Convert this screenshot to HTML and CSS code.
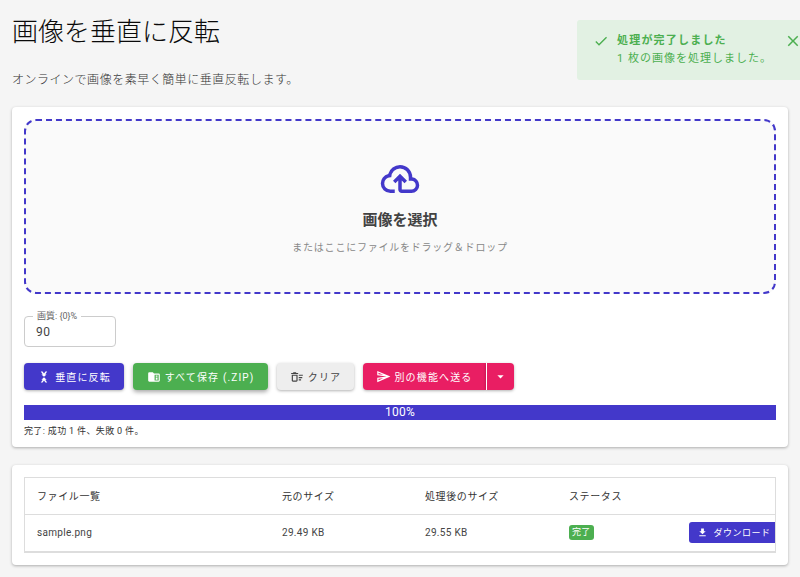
FILE: index.html
```html
<!DOCTYPE html>
<html lang="ja">
<head>
<meta charset="utf-8">
<title>画像を垂直に反転</title>
<link rel="stylesheet" href="styles.css">
</head>
<body>
<main class="page">
  <h1 class="title">画像を垂直に反転</h1>
  <p class="subtitle">オンラインで画像を素早く簡単に垂直反転します。</p>

  <section class="card tool">
    <div class="drop">
      <svg class="cloud" viewBox="0 0 24 24"><path d="M6.5 20Q4.22 20 2.61 18.43 1 16.85 1 14.58 1 12.63 2.17 11.1 3.35 9.57 5.25 9.15 5.88 6.85 7.75 5.43 9.63 4 12 4 14.93 4 16.96 6.04 19 8.07 19 11 20.73 11.2 21.86 12.5 23 13.78 23 15.5 23 17.38 21.69 18.69 20.38 20 18.5 20H13Q12.18 20 11.59 19.41 11 18.83 11 18V12.85L9.4 14.4L8 13L12 9L16 13L14.6 14.4L13 12.85V18H18.5Q19.55 18 20.27 17.27 21 16.55 21 15.5 21 14.45 20.27 13.73 19.55 13 18.5 13H17V11Q17 8.93 15.54 7.46 14.08 6 12 6 9.93 6 8.46 7.46 7 8.93 7 11H6.5Q5.05 11 4.03 12.03 3 13.05 3 14.5 3 15.95 4.03 17 5.05 18 6.5 18H9V20Z"/></svg>
      <div class="drop-title">画像を選択</div>
      <div class="drop-sub">またはここにファイルをドラッグ＆ドロップ</div>
    </div>

    <div class="field">
      <span class="field-label">画質: {0}%</span>
      <span class="field-value">90</span>
    </div>

    <div class="actions">
      <button class="btn primary"><svg class="ico" viewBox="0 0 24 24"><path d="M6.500 2.500h3L12 6l2.500-3.500h3L14 7.500h2.500L12 11.500l-4.500-4H10zM12 12.500l4.500 4H14l3.500 5h-3L12 18l-2.500 3.500h-3l3.500-5H7.500z"/></svg>垂直に反転</button>
      <button class="btn green"><svg class="ico" viewBox="0 0 24 24"><path fill-rule="evenodd" d="M4 4h6l2 2h8a2 2 0 0 1 2 2v10a2 2 0 0 1-2 2H4a2 2 0 0 1-2-2V6a2 2 0 0 1 2-2zM13 8v10h7V8zM15 9.500h3v2h-3zM15 13h3v3.500h-3z"/></svg>すべて保存 (.ZIP)</button>
      <button class="btn clear"><svg class="ico" viewBox="0 0 24 24"><path d="M15 16h4v2h-4zm0-8h7v2h-7zm0 4h6v2h-6zM3 18c0 1.100.9 2 2 2h6c1.100 0 2-.9 2-2V8H3v10zm2-8h6v8H5v-8zm5-6H6L5 5H2v2h12V5h-3z"/></svg>クリア</button>
      <div class="split">
        <button class="btn pink main-part"><svg class="ico send" viewBox="0 0 24 24"><path d="M4 6.030L11.500 9.250L4 8.250L4 6.030M11.500 14.750L4 17.970V15.750L11.500 14.750M2 3V10L17 12L2 14V21L23 12L2 3Z"/></svg>別の機能へ送る</button>
        <button class="btn pink caret-part"><svg class="ico" viewBox="0 0 24 24"><path d="M7 10l5 5 5-5z"/></svg></button>
      </div>
    </div>

    <div class="progress">100%</div>
    <p class="result">完了: 成功 1 件、失敗 0 件。</p>
  </section>

  <section class="card list">
    <div class="table-wrap">
      <table class="files">
        <thead>
          <tr><th class="c1">ファイル一覧</th><th class="c2">元のサイズ</th><th class="c3">処理後のサイズ</th><th class="c4">ステータス</th><th class="c5"></th></tr>
        </thead>
        <tbody>
          <tr>
            <td>sample.png</td><td>29.49 KB</td><td>29.55 KB</td>
            <td><span class="chip">完了</span></td>
            <td class="cell-btn"><button class="dl"><svg class="ico small" viewBox="0 0 24 24"><path d="M5 20h14v-2H5zM19 9h-4V3H9v6H5l7 7z"/></svg>ダウンロード</button></td>
          </tr>
        </tbody>
      </table>
    </div>
  </section>
</main>

<aside class="toast">
  <svg class="toast-check" viewBox="0 0 24 24"><path d="M21 7L9 19l-5.500-5.500 1.410-1.410L9 16.170 19.590 5.590z"/></svg>
  <div class="toast-text">
    <div class="toast-title">処理が完了しました</div>
    <div class="toast-msg">1 枚の画像を処理しました。</div>
  </div>
  <svg class="toast-close" viewBox="0 0 24 24"><path d="M19 6.410L17.590 5 12 10.590 6.410 5 5 6.410 10.590 12 5 17.590 6.410 19 12 13.410 17.590 19 19 17.590 13.410 12z"/></svg>
</aside>
</body>
</html>
```
FILE: styles.css
```css
* { box-sizing: border-box; }
html, body { margin: 0; height: 577px; overflow: hidden; }
body {
  background: #f5f5f5;
  color: #333;
  font-family: Roboto, "Noto Sans CJK JP", sans-serif;
  position: relative;
}
.page { padding: 12px 12px 0; }
.title {
  margin: 0;
  font-size: 26px;
  line-height: 40px;
  font-weight: 300;
  color: #0a0a0a;
}
.subtitle {
  margin: 19px 0 0;
  font-size: 12px;
  line-height: 18px;
  letter-spacing: .52px;
  font-weight: 300;
  color: #333;
}
.card {
  background: #fff;
  border-radius: 4px;
  box-shadow: 0 1px 3px rgba(0,0,0,.3);
}
.tool { margin-top: 18px; height: 340px; padding: 12px; }
.drop {
  height: 175px;
  border: 2px dashed #4338ca;
  border-radius: 12px;
  background: #fafafa;
  display: flex;
  flex-direction: column;
  align-items: center;
  padding-top: 37px;
}
.cloud { width: 42px; height: 42px; fill: #4338ca; display: block; }
.drop-title { margin-top: 9px; font-size: 15px; line-height: 22px; font-weight: 700; color: #424242; }
.drop-sub { margin-top: 9px; font-size: 10px; line-height: 16px; letter-spacing: .77px; color: #888; }
.field {
  position: relative;
  margin-top: 22px;
  width: 92px;
  height: 31px;
  border: 1px solid #ccc;
  border-radius: 4px;
  background: #fff;
  padding: 7px 11px;
}
.field-label {
  position: absolute;
  top: -6px;
  left: 8px;
  padding: 0 4px;
  background: #fff;
  font-size: 9px;
  line-height: 11px;
  color: #666;
}
.field-value { display: block; font-size: 12px; line-height: 16px; letter-spacing: .4px; color: #444; }
.actions { display: flex; gap: 9px; margin-top: 16px; align-items: center; }
.btn {
  height: 27px;
  border: 0;
  border-radius: 4px;
  display: inline-flex;
  align-items: center;
  justify-content: center;
  font-family: inherit;
  font-size: 10px;
  letter-spacing: 1.15px;
  padding: 0;
  color: #fff;
  box-shadow: 0 1px 3px rgba(0,0,0,.3);
}
.ico { width: 14px; height: 14px; fill: currentColor; margin-right: 4px; flex: none; }
.ico.send { width: 15px; height: 15px; margin-right: 3px; }
.ico.small { width: 11px; height: 11px; margin-right: 5px; }
.primary { background: #4338ca; width: 100px; }
.green { background: #4caf50; width: 135px; box-shadow: 0 2px 4px rgba(0,0,0,.35); }
.clear { background: #eee; color: #444; width: 77px; }
.split { display: flex; }
.pink { background: #e91e63; }
.main-part { width: 123px; border-radius: 4px 0 0 4px; }
.caret-part { width: 28px; border-radius: 0 4px 4px 0; border-left: 1px solid #fff; }
.caret-part .ico { margin: 0; width: 15px; height: 15px; }
.progress {
  margin-top: 15px;
  height: 15px;
  background: #4338ca;
  color: #fff;
  font-size: 12px;
  line-height: 15px;
  letter-spacing: .3px;
  text-align: center;
}
.result { margin: 4px 0 0; font-size: 9px; line-height: 14px; letter-spacing: .35px; color: #333; }
.list { margin-top: 18px; height: 100px; padding: 12px; }
.table-wrap {
  border: 1px solid #ddd;
  border-bottom-width: 2px;
  height: 76px;
  overflow: hidden;
}
.files { width: 100%; border-collapse: collapse; table-layout: fixed; }
.files th, .files td { text-align: left; padding: 0 0 0 12px; font-size: 10px; font-weight: 400; color: #444; white-space: nowrap; letter-spacing: .3px; }
.files th { height: 36px; border-bottom: 1px solid #ddd; letter-spacing: .6px; color: #333; }
.files td { height: 37px; }
.c1 { width: 245px; }
.c2 { width: 143px; }
.c3 { width: 144px; }
.c4 { width: 120px; }
.cell-btn { overflow: hidden; }
.chip {
  display: inline-block;
  background: #4caf50;
  color: #fff;
  font-size: 9px;
  line-height: 15px;
  border-radius: 3px;
  padding: 0 3px;
}
.files .cell-btn { padding-left: 0; text-align: right; }
.dl {
  width: 90px;
  height: 21px;
  margin-right: -4px;
  border: 0;
  border-radius: 3px;
  background: #4338ca;
  color: #fff;
  font-family: inherit;
  font-size: 9px;
  letter-spacing: .5px;
  display: inline-flex;
  align-items: center;
  justify-content: center;
  padding: 0;
  vertical-align: middle;
}
.toast {
  position: absolute;
  top: 20px;
  left: 577px;
  width: 223px;
  height: 60px;
  background: #e2f1e3;
  border-radius: 3px 0 0 3px;
  color: #4caf50;
  display: flex;
  align-items: flex-start;
  overflow: hidden;
}
.toast-check { width: 16px; height: 16px; fill: #4caf50; margin: 13px 0 0 16px; flex: none; }
.toast-text { margin: 12px 0 0 8px; font-size: 11px; line-height: 18px; flex: none; width: 160px; letter-spacing: 1px; }
.toast-title { font-weight: 700; letter-spacing: 1.2px; }
.toast-close { width: 18px; height: 18px; fill: #4caf50; margin: 12px 0 0 7px; flex: none; }
```
